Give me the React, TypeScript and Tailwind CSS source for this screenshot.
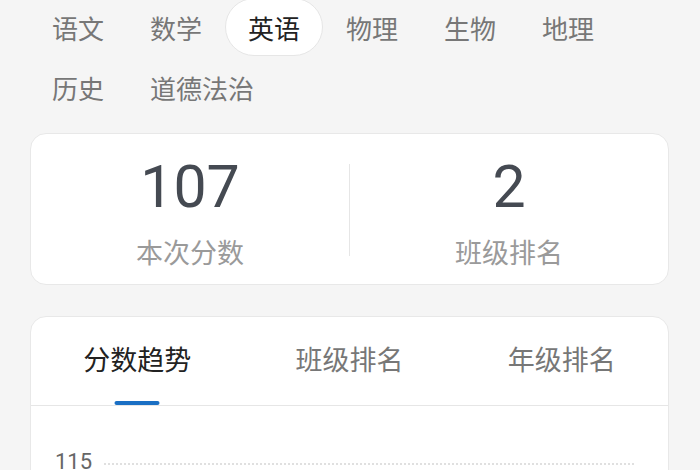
import React from 'react';

const subjects = ['语文', '数学', '英语', '物理', '生物', '地理', '历史', '道德法治'];
const tabs = ['分数趋势', '班级排名', '年级排名'];

export default function App(): JSX.Element {
  const active = '英语';
  const activeTab = 0;

  return (
    <div
      className="w-[700px] h-[470px] overflow-hidden bg-[#f5f5f5]"
      style={{ fontFamily: '"Noto Sans CJK SC", "Noto Sans", sans-serif' }}
    >
      {/* Subject chips */}
      <div className="-mt-[2px] pl-[29px] pr-[30px] flex flex-wrap gap-y-[2px]">
        {subjects.map((s) => (
          <div
            key={s}
            className={
              s === active
                ? 'h-[58px] px-[22px] flex items-center justify-center rounded-full bg-white border border-[#e6e6e6] text-[26px] text-[#222]'
                : 'h-[58px] px-[22px] flex items-center justify-center rounded-full border border-transparent text-[26px] text-[#777]'
            }
          >
            {s}
          </div>
        ))}
      </div>

      {/* Score summary */}
      <div className="mt-[17px] ml-[30px] mr-[31px] h-[152px] rounded-[16px] bg-white border border-[#e8e8e8] flex items-start">
        <div className="flex-1 flex flex-col items-center pt-[18px]">
          <span className="text-[59px] leading-[70px] text-[#454a52]" style={{ fontFamily: 'Roboto, sans-serif' }}>
            107
          </span>
          <span className="mt-[12px] text-[27px] leading-[36px] text-[#9a9a9a]">本次分数</span>
        </div>
        <div className="mt-[30px] w-px h-[92px] bg-[#e6e6e6]" />
        <div className="flex-1 flex flex-col items-center pt-[18px]">
          <span className="text-[59px] leading-[70px] text-[#454a52]" style={{ fontFamily: 'Roboto, sans-serif' }}>
            2
          </span>
          <span className="mt-[12px] text-[27px] leading-[36px] text-[#9a9a9a]">班级排名</span>
        </div>
      </div>

      {/* Trend card */}
      <div className="mt-[31px] ml-[30px] mr-[31px] h-[200px] rounded-t-[16px] bg-white border border-[#e8e8e8]">
        <div className="h-[89px] grid grid-cols-3 border-b border-[#e6e6e6]">
          {tabs.map((t, i) => (
            <div key={t} className="relative flex items-center justify-center pb-[3px]">
              <span className={i === activeTab ? 'text-[27px] text-[#222]' : 'text-[27px] text-[#777]'}>{t}</span>
              {i === activeTab && (
                <div className="absolute bottom-0 left-1/2 -translate-x-1/2 w-[45px] h-[4px] rounded-full bg-[#1a6fc4]" />
              )}
            </div>
          ))}
        </div>
        <div className="pl-[24px] pr-[34px] pt-[44px] flex items-center gap-[12px]">
          <span className="text-[22px] leading-[24px] text-[#666]" style={{ fontFamily: 'Roboto, sans-serif' }}>
            115
          </span>
          <div className="flex-1 border-t-2 border-dotted border-[#e0e0e0] mt-[4px]" />
        </div>
      </div>
    </div>
  );
}
